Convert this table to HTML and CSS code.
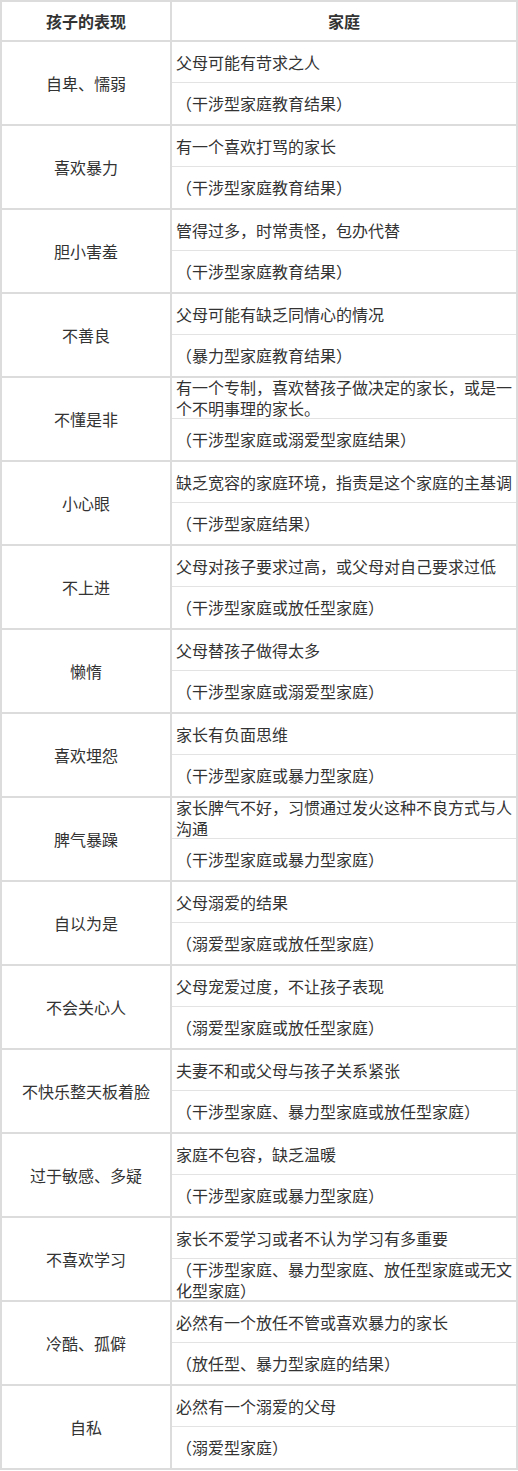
FILE: index.html
```html
<!DOCTYPE html>
<html lang="zh">
<head>
<meta charset="utf-8">
<link rel="stylesheet" href="styles.css">
</head>
<body>
<div class="table">
  <div class="row head">
    <div class="left">孩子的表现</div>
    <div class="right-head">家庭</div>
  </div>
  <div class="row"><div class="left">自卑、懦弱</div><div class="right"><div class="sub">父母可能有苛求之人</div><div class="sub">（干涉型家庭教育结果）</div></div></div>
  <div class="row"><div class="left">喜欢暴力</div><div class="right"><div class="sub">有一个喜欢打骂的家长</div><div class="sub">（干涉型家庭教育结果）</div></div></div>
  <div class="row"><div class="left">胆小害羞</div><div class="right"><div class="sub">管得过多，时常责怪，包办代替</div><div class="sub">（干涉型家庭教育结果）</div></div></div>
  <div class="row"><div class="left">不善良</div><div class="right"><div class="sub">父母可能有缺乏同情心的情况</div><div class="sub">（暴力型家庭教育结果）</div></div></div>
  <div class="row"><div class="left">不懂是非</div><div class="right"><div class="sub">有一个专制，喜欢替孩子做决定的家长，或是一<br>个不明事理的家长。</div><div class="sub">（干涉型家庭或溺爱型家庭结果）</div></div></div>
  <div class="row"><div class="left">小心眼</div><div class="right"><div class="sub">缺乏宽容的家庭环境，指责是这个家庭的主基调</div><div class="sub">（干涉型家庭结果）</div></div></div>
  <div class="row"><div class="left">不上进</div><div class="right"><div class="sub">父母对孩子要求过高，或父母对自己要求过低</div><div class="sub">（干涉型家庭或放任型家庭）</div></div></div>
  <div class="row"><div class="left">懒惰</div><div class="right"><div class="sub">父母替孩子做得太多</div><div class="sub">（干涉型家庭或溺爱型家庭）</div></div></div>
  <div class="row"><div class="left">喜欢埋怨</div><div class="right"><div class="sub">家长有负面思维</div><div class="sub">（干涉型家庭或暴力型家庭）</div></div></div>
  <div class="row"><div class="left">脾气暴躁</div><div class="right"><div class="sub">家长脾气不好，习惯通过发火这种不良方式与人<br>沟通</div><div class="sub">（干涉型家庭或暴力型家庭）</div></div></div>
  <div class="row"><div class="left">自以为是</div><div class="right"><div class="sub">父母溺爱的结果</div><div class="sub">（溺爱型家庭或放任型家庭）</div></div></div>
  <div class="row"><div class="left">不会关心人</div><div class="right"><div class="sub">父母宠爱过度，不让孩子表现</div><div class="sub">（溺爱型家庭或放任型家庭）</div></div></div>
  <div class="row"><div class="left">不快乐整天板着脸</div><div class="right"><div class="sub">夫妻不和或父母与孩子关系紧张</div><div class="sub">（干涉型家庭、暴力型家庭或放任型家庭）</div></div></div>
  <div class="row"><div class="left">过于敏感、多疑</div><div class="right"><div class="sub">家庭不包容，缺乏温暖</div><div class="sub">（干涉型家庭或暴力型家庭）</div></div></div>
  <div class="row"><div class="left">不喜欢学习</div><div class="right"><div class="sub">家长不爱学习或者不认为学习有多重要</div><div class="sub">（干涉型家庭、暴力型家庭、放任型家庭或无文<br>化型家庭）</div></div></div>
  <div class="row"><div class="left">冷酷、孤僻</div><div class="right"><div class="sub">必然有一个放任不管或喜欢暴力的家长</div><div class="sub">（放任型、暴力型家庭的结果）</div></div></div>
  <div class="row"><div class="left">自私</div><div class="right"><div class="sub">必然有一个溺爱的父母</div><div class="sub">（溺爱型家庭）</div></div></div>
</div>
</body>
</html>
```

FILE: styles.css
```css
html, body {
  margin: 0;
  padding: 0;
  background: #ffffff;
}
body {
  font-family: "Noto Sans CJK SC", "Microsoft YaHei", sans-serif;
  font-size: 16px;
  color: #333333;
  text-spacing-trim: space-all;
}
.table {
  width: 518px;
  box-sizing: border-box;
  border-top: 2px solid #dcdcdc;
  border-left: 2px solid #dcdcdc;
  border-right: 2px solid #dcdcdc;
}
.row {
  display: grid;
  grid-template-columns: 170px 1fr;
  height: 84px;
  box-sizing: border-box;
  border-bottom: 2px solid #dcdcdc;
}
.row.head {
  height: 40px;
  font-weight: bold;
}
.left {
  display: flex;
  align-items: center;
  justify-content: center;
  text-align: center;
  border-right: 2px solid #dcdcdc;
  line-height: 21px;
}
.right-head {
  display: flex;
  align-items: center;
  justify-content: center;
}
.right {
  display: flex;
  flex-direction: column;
}
.sub {
  height: 41px;
  box-sizing: border-box;
  display: flex;
  align-items: center;
  padding-left: 4px;
  line-height: 21px;
}
.sub:first-child {
  border-bottom: 1px solid #e3e3e3;
}
```
